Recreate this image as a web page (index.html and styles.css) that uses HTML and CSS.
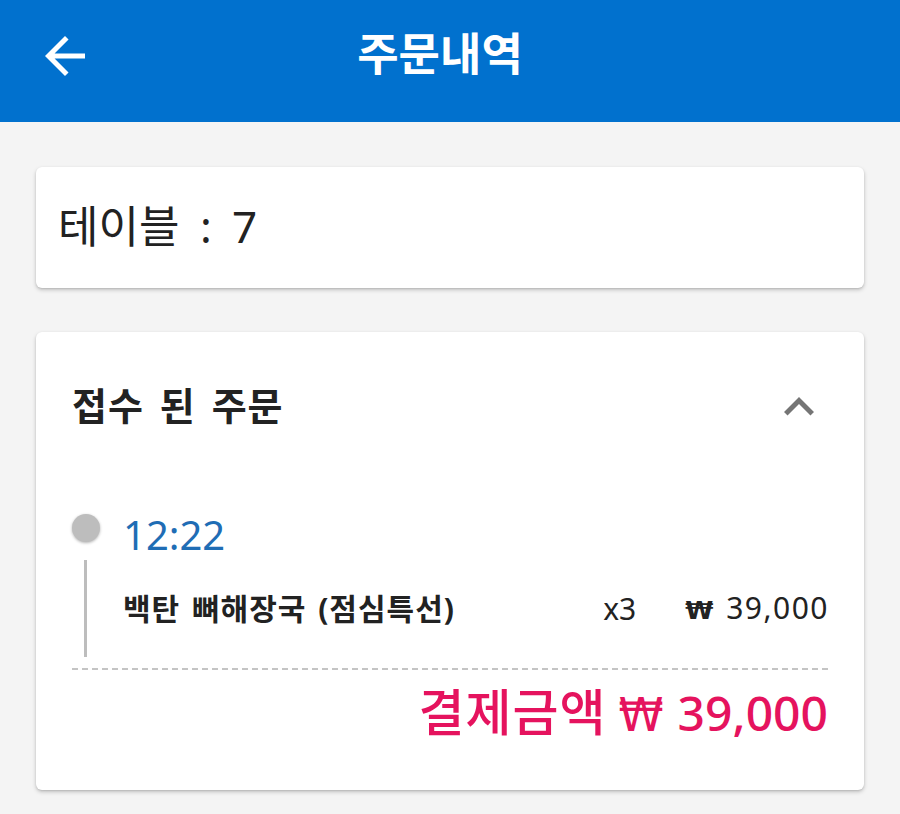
FILE: index.html
```html
<!DOCTYPE html>
<html lang="ko">

<head>
    <meta charset="UTF-8">
    <meta name="viewport" content="width=device-width, initial-scale=1.0">
    <title>주문내역</title>
    <link rel="stylesheet" href="styles.css">
</head>

<body>
    <header class="app-bar">
        <button class="back-btn" aria-label="뒤로">
            <svg viewBox="0 0 24 24" width="60" height="60">
                <path d="M20 11H7.83l5.59-5.59L12 4l-8 8 8 8 1.41-1.41L7.83 13H20v-2z" fill="#fff" />
            </svg>
        </button>
        <h1 class="app-title">주문내역</h1>
    </header>

    <main class="content">
        <div class="card table-card">
            <span class="table-label">테이블 : 7</span>
        </div>

        <div class="card order-card">
            <div class="order-head">
                <h2>접수 된 주문</h2>
                <svg class="chevron" viewBox="0 0 24 24" width="60" height="60">
                    <path d="M12 8l-6 6 1.41 1.41L12 10.83l4.59 4.58L18 14z" fill="#757575" />
                </svg>
            </div>

            <div class="timeline">
                <div class="time-row">
                    <span class="dot"></span>
                    <span class="time">12:22</span>
                </div>
                <div class="items">
                    <div class="item">
                        <span class="item-name">백탄 뼈해장국 (점심특선)</span>
                        <span class="item-qty">x3</span>
                        <span class="item-price"><span class="won">₩</span>39,000</span>
                    </div>
                </div>
            </div>

            <div class="total"><span class="total-label">결제금액</span><span class="won">₩</span>39,000</div>
        </div>
    </main>
</body>

</html>
```

FILE: styles.css
```css
body {
    font-family: "Noto Sans", "Noto Sans CJK KR", sans-serif;
    margin: 0;
    background-color: #f4f4f4;
    color: #222;
}

.app-bar {
    height: 122px;
    background-color: #0171ce;
    display: flex;
    align-items: center;
    justify-content: center;
    position: relative;
}

.back-btn {
    position: absolute;
    left: 35px;
    top: 26px;
    padding: 0;
    border: none;
    background: none;
    display: flex;
}

.app-title {
    margin: 0 20px 14px 0;
    color: #fff;
    font-size: 45px;
    font-weight: 700;
    line-height: 60px;
}

.content {
    padding: 45px 36px;
}

.card {
    background-color: #fff;
    border-radius: 6px;
    box-shadow: 0 2px 4px rgba(0, 0, 0, 0.2), 0 1px 2px rgba(0, 0, 0, 0.1);
}

.table-card {
    height: 121px;
    display: flex;
    align-items: center;
    padding: 0 22px;
    margin-bottom: 44px;
}

.table-label {
    font-size: 44px;
    line-height: 60px;
    margin-bottom: 4px;
    word-spacing: 9px;
}

.order-card {
    padding: 0 36px 42px;
}

.order-head {
    height: 146px;
    display: flex;
    align-items: center;
    justify-content: space-between;
}

.order-head h2 {
    margin: 0 0 4px 0;
    font-size: 38px;
    font-weight: 700;
    letter-spacing: 1px;
    word-spacing: 5px;
}

.chevron {
    margin-right: -1px;
    margin-top: 4px;
}

.timeline {
    margin-top: 36px;
}

.time-row {
    display: flex;
    align-items: flex-start;
    gap: 23px;
}

.dot {
    width: 28px;
    height: 28px;
    border-radius: 50%;
    background-color: #bdbdbd;
    box-shadow: 0 1px 3px rgba(0, 0, 0, 0.3);
}

.time {
    font-size: 40px;
    line-height: 42px;
    color: #1f6db5;
}

.items {
    margin: 4px 0 0 12px;
    border-left: 3px solid #bdbdbd;
    padding-left: 36px;
    height: 97px;
    display: flex;
    flex-direction: column;
    justify-content: center;
}

.item {
    display: flex;
    align-items: center;
    font-size: 30px;
    line-height: 40px;
}

.item-name {
    flex: 1;
    font-weight: 700;
    letter-spacing: 1px;
    word-spacing: 3px;
}

.item-qty {
    margin-right: 49px;
}

.item-price {
    letter-spacing: 1.5px;
    margin-right: -1px;
}

.won {
    font-family: "DejaVu Sans", sans-serif;
    font-weight: 700;
    font-size: 0.85em;
    letter-spacing: 0;
    margin-right: 0.5em;
}

.total {
    margin-top: 11px;
    border-top: 2px dashed #c4c4c4;
    padding-top: 10px;
    text-align: right;
    font-size: 48px;
    font-weight: 500;
    line-height: 64px;
    color: #e5135e;
}

.total-label {
    font-size: 50px;
    letter-spacing: 1px;
    margin-right: 12px;
}

.total .won {
    font-weight: 400;
    font-size: 0.95em;
    margin-right: 14px;
}
```
